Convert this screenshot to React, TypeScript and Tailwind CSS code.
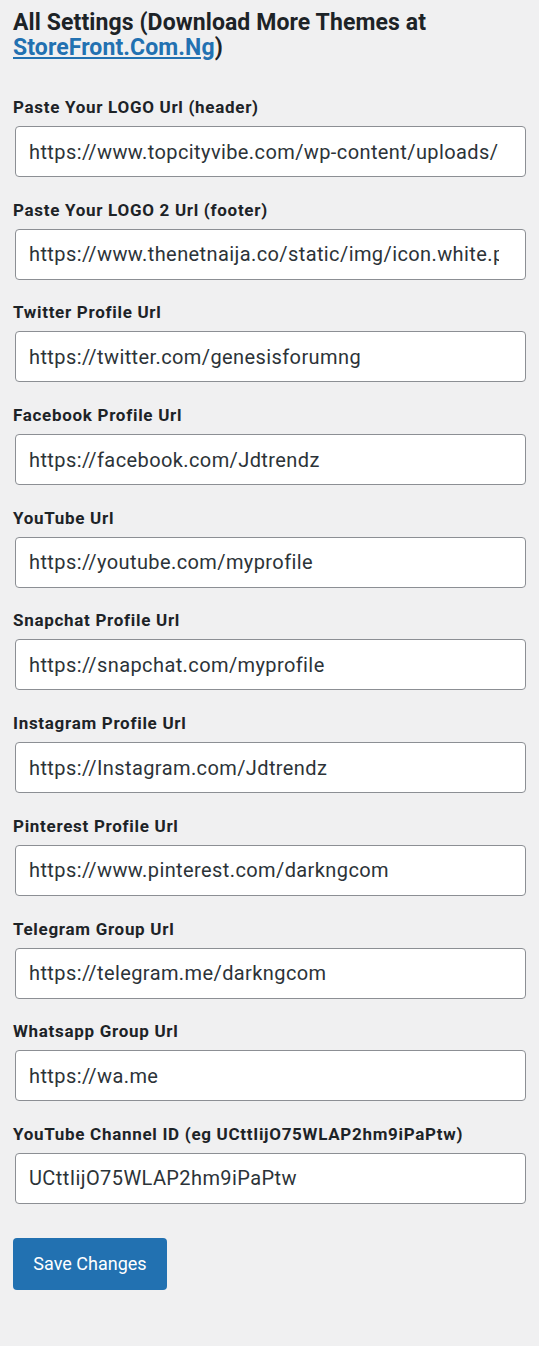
import React from "react";

const fields: { label: string; value: string }[] = [
  { label: "Paste Your LOGO Url (header)", value: "https://www.topcityvibe.com/wp-content/uploads/2021/03/logo.png" },
  { label: "Paste Your LOGO 2 Url (footer)", value: "https://www.thenetnaija.co/static/img/icon.white.png" },
  { label: "Twitter Profile Url", value: "https://twitter.com/genesisforumng" },
  { label: "Facebook Profile Url", value: "https://facebook.com/Jdtrendz" },
  { label: "YouTube Url", value: "https://youtube.com/myprofile" },
  { label: "Snapchat Profile Url", value: "https://snapchat.com/myprofile" },
  { label: "Instagram Profile Url", value: "https://Instagram.com/Jdtrendz" },
  { label: "Pinterest Profile Url", value: "https://www.pinterest.com/darkngcom" },
  { label: "Telegram Group Url", value: "https://telegram.me/darkngcom" },
  { label: "Whatsapp Group Url", value: "https://wa.me" },
  { label: "YouTube Channel ID (eg UCttIijO75WLAP2hm9iPaPtw)", value: "UCttIijO75WLAP2hm9iPaPtw" },
];

export default function App() {
  return (
    <div
      className="min-h-[1346px] w-[539px] bg-[#f0f0f1] px-[13px] pt-[10px] text-[#1d2327]"
      style={{ fontFamily: "Roboto, 'Liberation Sans', sans-serif" }}
    >
      <h1 className="text-[23px] font-bold leading-[25px] tracking-[0.1px]">
        All Settings (Download More Themes at{" "}
        <a href="#" className="text-[#2271b1] underline underline-offset-2">
          StoreFront.Com.Ng
        </a>
        )
      </h1>
      <div className="mt-[37px] flex flex-col gap-[22.7px]">
        {fields.map((f) => (
          <div key={f.label} className="flex flex-col">
            <label className="h-[20px] text-[17px] font-bold leading-[20px] tracking-[0.7px]">{f.label}</label>
            <input
              readOnly
              value={f.value}
              className="ml-[2px] mt-[9px] h-[51px] w-[511px] rounded-[4px] border border-[#8c8f94] bg-white pl-[13px] pr-[26px] text-[20px] tracking-[0.4px] text-[#2c3338] outline-none"
              style={{ fontFamily: "Roboto, 'Liberation Sans', sans-serif" }}
            />
          </div>
        ))}
      </div>
      <button className="mt-[34px] h-[52px] w-[154px] rounded-[4px] bg-[#2271b1] text-[18px] text-white">
        Save Changes
      </button>
    </div>
  );
}
